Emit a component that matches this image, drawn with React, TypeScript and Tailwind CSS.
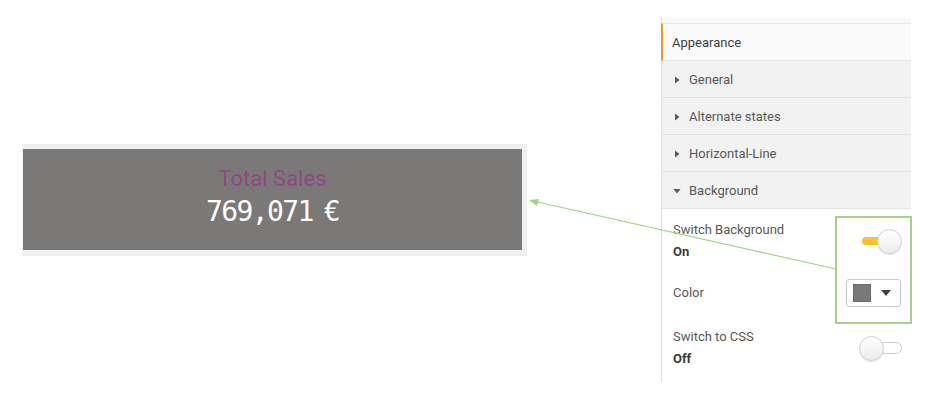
import React from "react";

const Caret = ({ open }: { open?: boolean }) => (
  <svg width="8" height="8" viewBox="0 0 8 8" className="shrink-0">
    {open ? <path d="M0.5 2 L7.5 2 L4 6.5 Z" fill="#595959" /> : <path d="M2 0.5 L6.5 4 L2 7.5 Z" fill="#595959" />}
  </svg>
);

const Section = ({ label, open }: { label: string; open?: boolean }) => (
  <div className="h-[37px] flex items-center gap-[8px] pl-[11px] pt-[1px] bg-[#f2f2f2] border-b border-[#e4e4e4]">
    <Caret open={open} />
    <span>{label}</span>
  </div>
);

const Toggle = ({ on }: { on?: boolean }) =>
  on ? (
    <div className="relative w-[40px] h-[25px] flex items-center">
      <div className="w-[28px] h-[8px] rounded-full bg-[#fdc22b]" />
      <div className="absolute right-0 top-0 w-[25px] h-[25px] rounded-full border border-[#d0d0d0] bg-gradient-to-b from-white to-[#ececec] shadow-[0_1px_1px_rgba(0,0,0,0.12)]" />
    </div>
  ) : (
    <div className="relative w-[43px] h-[25px] flex items-center justify-end">
      <div className="w-[24px] h-[12px] rounded-full border border-[#cfcfcf] bg-white" />
      <div className="absolute left-0 top-0 w-[25px] h-[25px] rounded-full border border-[#d0d0d0] bg-gradient-to-b from-white to-[#ececec] shadow-[0_1px_1px_rgba(0,0,0,0.12)]" />
    </div>
  );

export default function App() {
  return (
    <div className="relative w-[946px] h-[403px] bg-white flex overflow-hidden font-['Roboto',sans-serif]">
      {/* KPI card */}
      <div className="ml-[22px] mt-[144px] w-[505px] h-[112px] bg-[#f0f0f0] pl-[1px] pt-[5px] pr-[5px] pb-[6px] self-start">
        <div className="w-full h-full bg-[#7b7977] flex flex-col items-center justify-center pb-[4px]">
          <div className="text-[22px] leading-[26px] text-[#8d4983] font-['Roboto',sans-serif]">Total Sales</div>
          <div className="text-[28px] leading-[34px] text-white font-['DejaVu_Sans_Mono',monospace] tracking-[-1.6px] mt-[3px]">
            769,071<span className="tracking-[-6px]"> </span>€
          </div>
        </div>
      </div>

      {/* Properties panel */}
      <div className="ml-[134px] mt-[18px] w-[250px] h-[364px] self-start border-l border-[#e2e2e2] text-[13px] leading-[16px] text-[#595959]">
        <div className="h-[5px] bg-[#f8f8f8]" />
        <div className="h-[38px] flex items-center pl-[9px] pt-[1px] bg-[#fafafa] border-t border-[#e6e6e6] border-b border-b-[#e6e6e6] border-l-[2px] border-l-[#f7941d] -ml-[1px] text-[#404040]">
          Appearance
        </div>
        <Section label="General" />
        <Section label="Alternate states" />
        <Section label="Horizontal-Line" />
        <Section label="Background" open />

        <div className="pl-[11px] pr-[9px]">
          <div className="mt-[13px] flex items-center justify-between">
            <div className="flex flex-col gap-[6px]">
              <span>Switch Background</span>
              <span className="font-bold text-[#3a3a3a]">On</span>
            </div>
            <Toggle on />
          </div>
          <div className="mt-[19px] h-[28px] flex items-center justify-between">
            <span>Color</span>
            <div className="w-[55px] h-[28px] mr-[1px] rounded-[3px] border border-[#c8c8c8] bg-white flex items-center pl-[6px] pr-[9px] justify-between">
              <div className="w-[18px] h-[18px] bg-[#7b7977] border border-[#6a6a6a]" />
              <svg width="10" height="6" viewBox="0 0 10 6">
                <path d="M0 0 L10 0 L5 6 Z" fill="#404040" />
              </svg>
            </div>
          </div>
          <div className="mt-[22px] flex items-center justify-between">
            <div className="flex flex-col gap-[6px]">
              <span>Switch to CSS</span>
              <span className="font-bold text-[#3a3a3a]">Off</span>
            </div>
            <Toggle />
          </div>
        </div>
      </div>

      {/* annotation: highlight box */}
      <div className="absolute left-[835px] top-[216px] w-[77px] h-[108px] border-2 border-[#a6d18b]" />

      {/* annotation: arrow */}
      <svg className="absolute inset-0 pointer-events-none" width="946" height="403">
        <line x1="836" y1="269" x2="533" y2="201" stroke="#a6d18b" strokeWidth="1.2" />
        <path d="M529 200 L539 199 L537 206 Z" fill="#a6d18b" />
      </svg>
    </div>
  );
}
